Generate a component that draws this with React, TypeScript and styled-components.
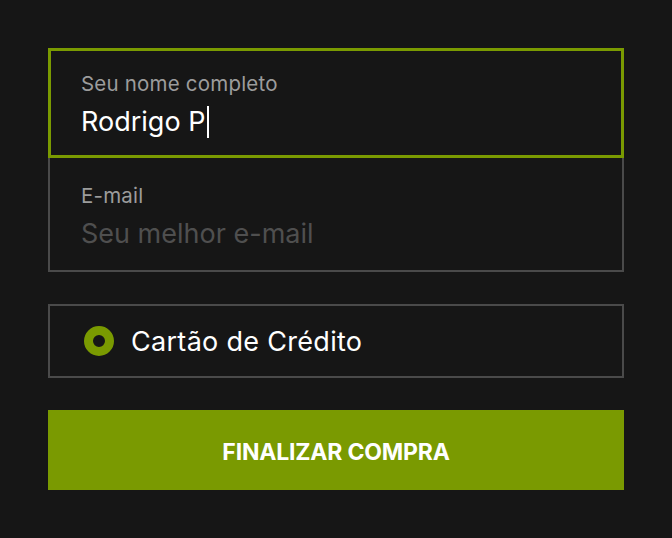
import React from 'react';
import styled, { createGlobalStyle, css } from 'styled-components';

const GlobalStyle = createGlobalStyle`
    html, body {
        margin: 0;
        padding: 0;
        background: #161616;
    }
    body {
        font-family: Inter, "Noto Sans", "Liberation Sans", sans-serif;
    }
`;

const green = '#7a9a01';
const line = '#4a4a4a';

const Page = styled.div`
    display: flex;
    flex-direction: column;
    padding: 48px;
    gap: 32px;
    width: 576px;
`;

const Fields = styled.div`
    display: flex;
    flex-direction: column;
`;

const Field = styled.label<{ focused?: boolean }>(
    ({ focused = false }) => css`
        display: flex;
        flex-direction: column;
        gap: 4px;
        box-sizing: border-box;
        padding: ${focused ? '19px 30px 0' : '24px 31px 0'};
        height: ${focused ? '110px' : '114px'};
        border: ${focused ? `3px solid ${green}` : `2px solid ${line}`};
        ${!focused &&
        css`
            border-top: none;
        `}
    `
);

const Label = styled.span`
    font-size: 20.5px;
    letter-spacing: 0.2px;
    color: #9c9c9c;
    line-height: 28px;
`;

const Value = styled.span<{ placeholder?: boolean }>(
    ({ placeholder = false }) => css`
        display: flex;
        align-items: center;
        font-size: 27px;
        letter-spacing: 0;
        line-height: 40px;
        color: ${placeholder ? '#4f4f4f' : '#ffffff'};
    `
);

const Caret = styled.span`
    display: inline-block;
    width: 2px;
    height: 32px;
    margin-left: 2px;
    background: #ffffff;
`;

const PaymentOption = styled.div`
    display: flex;
    align-items: center;
    gap: 17px;
    box-sizing: border-box;
    height: 74px;
    padding: 0 34px;
    border: 2px solid ${line};
`;

const Radio = styled.span`
    box-sizing: border-box;
    width: 30px;
    height: 30px;
    border-radius: 50%;
    border: 9px solid ${green};
    background: #161616;
`;

const OptionText = styled.span`
    font-size: 27px;
    letter-spacing: 0.3px;
    color: #ffffff;
`;

const Submit = styled.button`
    height: 80px;
    border: none;
    padding: 4px 0 0;
    background: ${green};
    color: #ffffff;
    font-family: inherit;
    font-size: 23px;
    font-weight: 700;
    letter-spacing: -0.2px;
    text-transform: uppercase;
    cursor: pointer;
`;

export default function App() {
    return (
        <>
            <GlobalStyle />
            <Page>
                <Fields>
                    <Field focused>
                        <Label>Seu nome completo</Label>
                        <Value>
                            Rodrigo P
                            <Caret />
                        </Value>
                    </Field>
                    <Field>
                        <Label>E-mail</Label>
                        <Value placeholder>Seu melhor e-mail</Value>
                    </Field>
                </Fields>
                <PaymentOption>
                    <Radio />
                    <OptionText>Cartão de Crédito</OptionText>
                </PaymentOption>
                <Submit>Finalizar compra</Submit>
            </Page>
        </>
    );
}
